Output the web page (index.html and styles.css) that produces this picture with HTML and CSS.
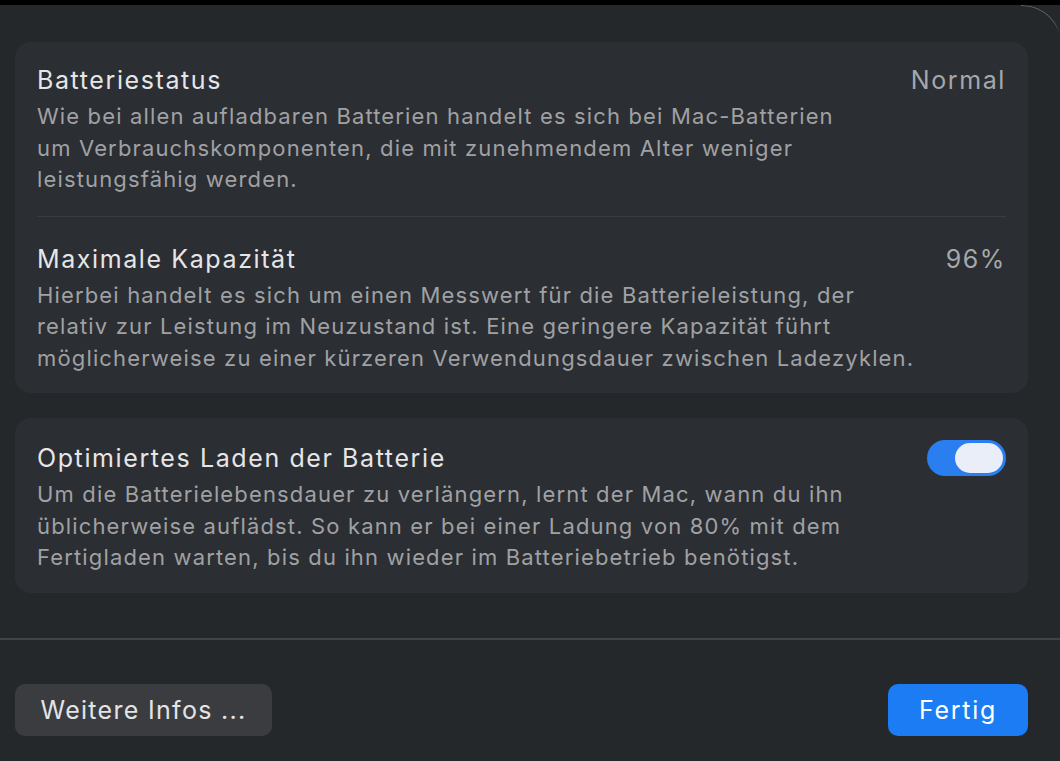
FILE: index.html
```html
<!DOCTYPE html>
<html lang="de">
<head>
<meta charset="utf-8">
<title>Batterie</title>
<link rel="stylesheet" href="styles.css">
</head>
<body>
<div class="dialog">
  <div class="content">
    <section class="card">
      <div class="row">
        <div class="row-head">
          <span class="title">Batteriestatus</span>
          <span class="value">Normal</span>
        </div>
        <p class="desc">Wie bei allen aufladbaren Batterien handelt es sich bei Mac-Batterien<br>um Verbrauchskomponenten, die mit zunehmendem Alter weniger<br>leistungsfähig werden.</p>
      </div>
      <div class="divider"></div>
      <div class="row row-second">
        <div class="row-head">
          <span class="title">Maximale Kapazität</span>
          <span class="value">96%</span>
        </div>
        <p class="desc">Hierbei handelt es sich um einen Messwert für die Batterieleistung, der<br>relativ zur Leistung im Neuzustand ist. Eine geringere Kapazität führt<br>möglicherweise zu einer kürzeren Verwendungsdauer zwischen Ladezyklen.</p>
      </div>
    </section>
    <section class="card card-toggle">
      <div class="row">
        <div class="row-head">
          <span class="title">Optimiertes Laden der Batterie</span>
          <span class="switch"><span class="knob"></span></span>
        </div>
        <p class="desc">Um die Batterielebensdauer zu verlängern, lernt der Mac, wann du ihn<br>üblicherweise auflädst. So kann er bei einer Ladung von 80% mit dem<br>Fertigladen warten, bis du ihn wieder im Batteriebetrieb benötigst.</p>
      </div>
    </section>
  </div>
  <div class="separator"></div>
  <div class="footer">
    <button class="btn btn-secondary">Weitere Infos ...</button>
    <button class="btn btn-primary">Fertig</button>
  </div>
</div>
</body>
</html>
```

FILE: styles.css
```css
* { box-sizing: border-box; }
html, body { margin: 0; padding: 0; }
body {
  background: #000;
  width: 1060px;
  height: 761px;
  overflow: hidden;
  font-family: Inter, "Noto Sans", sans-serif;
}
.dialog {
  position: relative;
  margin-top: 5px;
  height: 756px;
  background: #25282b;
  display: flex;
  flex-direction: column;
}
.dialog::after {
  content: "";
  position: absolute;
  top: 0;
  right: -2px;
  width: 40px;
  height: 40px;
  border-top: 1.5px solid rgba(200, 205, 215, 0.35);
  border-right: 1.5px solid rgba(200, 205, 215, 0.35);
  border-top-right-radius: 40px;
  -webkit-mask-image: linear-gradient(to bottom, #000 0, #000 40%, transparent 70%);
  mask-image: linear-gradient(to bottom, #000 0, #000 40%, transparent 70%);
}
.content {
  padding: 37px 32px 0 15px;
  display: flex;
  flex-direction: column;
  gap: 25px;
}
.card {
  background: #2b2e32;
  border-radius: 16px;
  padding: 0 22px;
}
.row {
  padding: 23px 0 20px;
}
.row-second {
  padding: 27px 0 19px;
}
.card-toggle .row {
  padding: 25px 0 19px;
}
.row-head {
  display: flex;
  justify-content: space-between;
  align-items: center;
  height: 30px;
}
.title {
  font-size: 25px;
  color: #e6e6e8;
  letter-spacing: 1.6px;
}
.value {
  font-size: 25px;
  color: #a6a7aa;
  letter-spacing: 1.6px;
}
.desc {
  margin: 6px 0 0;
  font-size: 22px;
  line-height: 31.5px;
  color: #a0a1a4;
  letter-spacing: 1.15px;
}
.divider {
  height: 1px;
  background: #3a3d41;
}
.switch {
  width: 79px;
  height: 36px;
  border-radius: 18px;
  background: #2a7ef0;
  display: flex;
  align-items: center;
  justify-content: flex-end;
  padding: 0 3px;
}
.knob {
  width: 48px;
  height: 30px;
  border-radius: 15px;
  background: #e9eef8;
}
.separator {
  margin-top: 45px;
  height: 2px;
  background: #404347;
}
.footer {
  padding: 44px 32px 0 15px;
  display: flex;
  justify-content: space-between;
}
.btn {
  height: 52px;
  border: none;
  border-radius: 10px;
  font-family: Inter, "Noto Sans", sans-serif;
  font-size: 25px;
  letter-spacing: 1.3px;
  padding: 0;
}
.btn-secondary {
  background: #3a3c40;
  color: #e4e4e6;
  width: 257px;
}
.btn-primary {
  background: #1b7cf4;
  color: #fff;
  width: 140px;
  letter-spacing: 1.7px;
}
```
